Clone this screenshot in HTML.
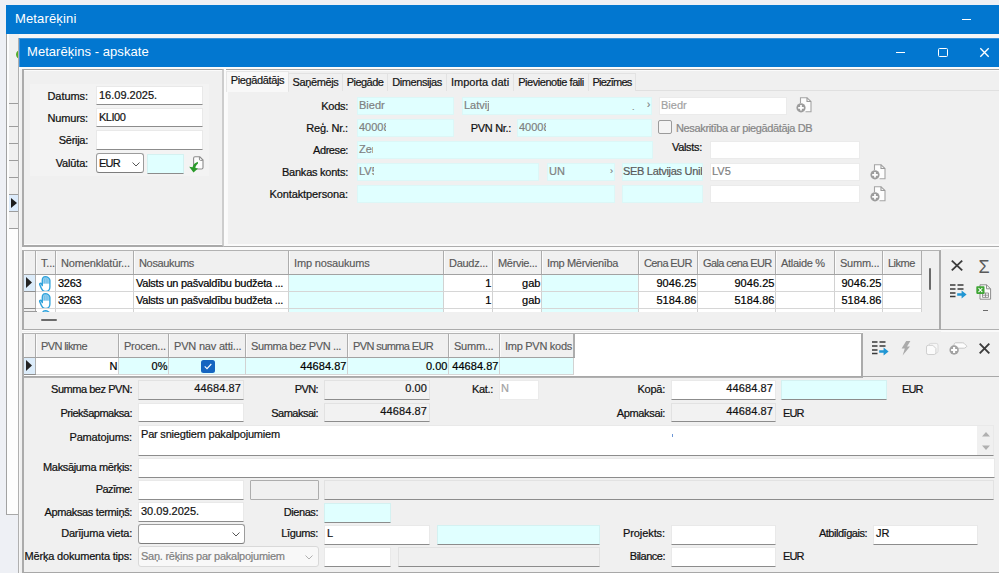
<!DOCTYPE html>
<html lang="lv">
<head>
<meta charset="utf-8">
<title>Metarēķins - apskate</title>
<style>
*{box-sizing:border-box;margin:0;padding:0}
html,body{width:999px;height:573px;overflow:hidden}
body{background:#eef0f5;font-family:"Liberation Sans",sans-serif;font-size:11px;color:#111;position:relative;letter-spacing:-0.25px}
.abs,.abs *{position:absolute}
#root *{position:absolute}
.t{white-space:nowrap;line-height:13px;height:13px;-webkit-text-stroke:0.2px}
.lbl{white-space:nowrap;line-height:13px;height:13px;text-align:right;color:#101010;-webkit-text-stroke:0.22px;margin-top:1px}
.in{background:#fff;border:1px solid #e9e9e9;border-bottom:1px solid #8c8c8c}
.in.cy{background:#e0ffff;border-color:#d4f1f1;border-bottom-color:#8c8c8c}
.in.ro{background:#f2f2f2;border:1px solid #e2e2e2;border-bottom:1px solid #8c8c8c}
.fl{background:#fff;border:1px solid #ebebeb}
.fc{background:#e0ffff;border:1px solid #dcf7f7}
.v{white-space:nowrap;line-height:13px;height:13px;left:2px;top:2px;color:#111;letter-spacing:0;-webkit-text-stroke:0.2px}
.fc>.v,.fl>.v{left:1px;top:1px}
.cut{overflow:hidden}
.g{color:#7f7f7f}
.r{left:auto;right:2px;text-align:right;letter-spacing:0.1px}
.tab{-webkit-text-stroke:0.2px;letter-spacing:-0.35px;top:73px;height:18px;border:1px solid #e2e2e2;border-bottom:none;background:#f0f0f0;text-align:center;line-height:16px;white-space:nowrap;color:#141414}
.hd{top:0;height:23px;background:#f0f0f0;border-right:2px solid #adadad;box-shadow:inset 1px 0 0 #fbfbfb;color:#585858;line-height:25px;padding-left:5px;white-space:nowrap;overflow:hidden;-webkit-text-stroke:0.15px}
.c{height:17px;background:#fff;border-right:1px solid #d2d2d2;border-bottom:1px solid #d6d6d6;line-height:16px;white-space:nowrap;overflow:hidden;padding:0 2px;color:#000;letter-spacing:-0.25px;-webkit-text-stroke:0.2px}
.c.cy{background:#e0ffff}
.c.n{text-align:right;padding-right:0.5px;letter-spacing:0.05px}
svg{overflow:visible}
</style>
</head>
<body>
<div id="root">

<!-- ===== outer window "Metarēķini" ===== -->
<div style="left:6px;top:5px;width:993px;height:29px;background:#0277d0"></div>
<div class="t" style="left:15px;top:11px;font-size:13px;line-height:16px;height:16px;color:#fff;letter-spacing:0.15px;-webkit-text-stroke:0">Metarēķini</div>
<div style="left:962px;top:19px;width:9px;height:1.3px;background:#fff"></div>
<!-- outer client strip -->
<div style="left:6px;top:34px;width:993px;height:5px;background:#f6f6f6"></div>
<div style="left:6px;top:34px;width:13px;height:481px;background:#fdfdfd;border-left:1px solid #a2a2a2;border-bottom:1px solid #a8a8a8"></div>
<div style="left:9px;top:34px;width:10px;height:194px;background:#f0f0f0"></div>
<div style="left:16px;top:50px;width:9px;height:9px;border-radius:50%;border:2px solid #55ad2c;background:#c9ecb2"></div>
<!-- row lines of hidden list -->
<div style="left:9px;top:103px;width:10px;height:1px;background:#9d9d9d"></div>
<div style="left:9px;top:126px;width:10px;height:1px;background:#9d9d9d"></div>
<div style="left:9px;top:143px;width:10px;height:1px;background:#9d9d9d"></div>
<div style="left:9px;top:160px;width:10px;height:1px;background:#9d9d9d"></div>
<div style="left:9px;top:177px;width:10px;height:1px;background:#9d9d9d"></div>
<div style="left:9px;top:194px;width:10px;height:18px;background:#dcebfb;border-top:1px solid #9d9d9d;border-bottom:1px solid #9d9d9d"></div>
<svg style="left:11px;top:198px" width="6" height="10" viewBox="0 0 6 10"><path d="M0 0 L6 5 L0 10 Z" fill="#1c1c1c"/></svg>
<div style="left:9px;top:228px;width:10px;height:1px;background:#9d9d9d"></div>

<!-- ===== inner window "Metarēķins - apskate" ===== -->
<div id="win" style="left:18px;top:38px;width:981px;height:535px;background:#f0f0f0;border-left:1px solid #b0b0b0;box-shadow:inset 1px 0 0 #f6f6f6"></div>
<div style="left:19px;top:38px;width:980px;height:29px;background:#0277d0;border-top:1px solid #3b93dc;border-left:1px solid #3b93dc"></div>
<div class="t" style="left:27px;top:44px;font-size:13px;line-height:16px;height:16px;color:#fff;letter-spacing:0.05px;-webkit-text-stroke:0">Metarēķins - apskate</div>
<div style="left:896px;top:52px;width:9px;height:1.3px;background:#fff"></div>
<div style="left:938px;top:48px;width:9.5px;height:9px;border:1.3px solid #fff;border-radius:1.5px"></div>
<svg style="left:980px;top:48px" width="9" height="9" viewBox="0 0 9 9"><path d="M0.3 0.3 L8.7 8.7 M8.7 0.3 L0.3 8.7" stroke="#fff" stroke-width="1.35" fill="none"/></svg>
<div style="left:19px;top:67px;width:980px;height:2px;background:#fafafa"></div>

<!-- ===== top-left panel ===== -->
<div style="left:22px;top:69px;width:977px;height:1px;background:#a3a3a3"></div>
<div style="left:22px;top:70px;width:977px;height:1px;background:#fbfbfb"></div>
<div style="left:22px;top:69px;width:202px;height:178px;border:2px solid #ababab;border-top:1px solid #a3a3a3;border-right:2px solid #cdcdcd;border-bottom:2px solid #a9a9a9;box-shadow:inset 0 1px 0 #fbfbfb,inset 0 -1px 0 #fbfbfb,2px 0 0 #fbfbfb"></div>
<div style="left:30px;top:84px;width:179px;height:92px;background:#f3f3f3"></div>
<div class="lbl" style="left:30px;top:89px;width:58px;letter-spacing:-0.06px">Datums:</div>
<div class="in" style="left:96px;top:86px;width:107px;height:19px"><div class="v">16.09.2025.</div></div>
<div class="lbl" style="left:30px;top:111px;width:58px;letter-spacing:-0.15px">Numurs:</div>
<div class="in" style="left:96px;top:108px;width:107px;height:19px"><div class="v" style="letter-spacing:-0.5px">KLI00</div></div>
<div class="lbl" style="left:30px;top:133px;width:58px;letter-spacing:-0.28px">Sērija:</div>
<div class="in" style="left:96px;top:130px;width:107px;height:20px"></div>
<div class="lbl" style="left:30px;top:156px;width:58px;letter-spacing:-0.17px">Valūta:</div>
<div style="left:96px;top:153px;width:48px;height:20px;background:#fff;border:1px solid #9c9c9c;border-bottom-color:#7d7d7d;border-radius:3px"><div class="v" style="left:2px;top:3px;letter-spacing:-0.8px">EUR</div>
<svg style="left:35px;top:8px" width="8" height="5" viewBox="0 0 8 5"><path d="M0.5 0.5 L4 4 L7.5 0.5" stroke="#555" stroke-width="1" fill="none"/></svg></div>
<div class="in cy" style="left:147px;top:154px;width:37px;height:20px"></div>
<!-- import icon -->
<svg style="left:189px;top:156px" width="16" height="17" viewBox="0 0 16 17">
<path d="M4.6 2.2 a1.4 1.4 0 0 1 1.4 -1.4 H10.8 L14 4 V11.6 a1.4 1.4 0 0 1 -1.4 1.4 H6 a1.4 1.4 0 0 1 -1.4 -1.4 Z" fill="#fdfdfd" stroke="#8c8c8c" stroke-width="1.1"/>
<path d="M10.4 1 V3.2 a1.2 1.2 0 0 0 1.2 1.2 H13.8" fill="none" stroke="#8c8c8c" stroke-width="1"/>
<path d="M8.9 5.8 C6 6.8 4.2 8.6 3.5 11.3 L0.2 10.7 L4.5 16.4 L9 12.5 L6.4 12 C6.7 9.9 7.5 8.5 8.9 7.7 Z" fill="#2a9a2a"/>
</svg>

<!-- ===== tab control ===== -->
<div style="left:226px;top:90px;width:773px;height:155px;background:#f0f0f0;border-top:1px solid #e0e0e0;border-left:2px solid #fafafa"></div>
<div class="tab" style="left:226px;top:71px;width:63px;height:21px;background:#f7f7f7;border-color:#e6e6e6;line-height:17px;background:#f8f8f8;letter-spacing:-0.37px">Piegādātājs</div>
<div class="tab" style="left:288px;width:55px;letter-spacing:-0.36px">Saņēmējs</div>
<div class="tab" style="left:342px;width:46px;letter-spacing:-0.54px">Piegāde</div>
<div class="tab" style="left:387px;width:60px;letter-spacing:-0.43px">Dimensijas</div>
<div class="tab" style="left:446px;width:68px;letter-spacing:0.01px">Importa dati</div>
<div class="tab" style="left:513px;width:76px;letter-spacing:-0.45px">Pievienotie faili</div>
<div class="tab" style="left:588px;width:48px;letter-spacing:-0.75px">Piezīmes</div>

<div class="lbl" style="left:248px;top:99px;width:100px;letter-spacing:-0.28px">Kods:</div>
<div class="fc" style="left:357px;top:97px;width:97px;height:18px"><div class="v g">Biedr</div></div>
<div class="fc" style="left:462px;top:97px;width:190px;height:18px"><div class="v g cut" style="width:25px">Latvij</div><div class="v g" style="left:169px;top:3px;font-size:9px">.</div><div class="v g" style="left:184px;top:0px;font-size:10px">›</div></div>
<div class="fl" style="left:659px;top:97px;width:128px;height:18px"><div class="v" style="color:#a2a2a2">Biedr</div></div>

<div class="lbl" style="left:248px;top:121px;width:100px;letter-spacing:-0.18px">Reģ. Nr.:</div>
<div class="fc" style="left:357px;top:119px;width:97px;height:18px"><div class="v g cut" style="width:27px">40008</div></div>
<div class="lbl" style="left:440px;top:121px;width:71px;letter-spacing:-0.32px">PVN Nr.:</div>
<div class="fc" style="left:517px;top:119px;width:135px;height:18px"><div class="v g cut" style="width:27px">40008</div></div>
<div style="left:658px;top:120px;width:14px;height:14px;background:#f4f4f4;border:1px solid #9b9b9b;border-radius:2px"></div>
<div class="t" style="left:676px;top:122px;color:#868686;letter-spacing:-0.36px">Nesakritība ar piegādātāja DB</div>

<div class="lbl" style="left:248px;top:143px;width:100px;letter-spacing:-0.42px">Adrese:</div>
<div class="fc" style="left:357px;top:141px;width:296px;height:18px"><div class="v g cut" style="width:14px">Zem</div></div>
<div class="lbl" style="left:640px;top:140px;width:62px;letter-spacing:-0.31px">Valsts:</div>
<div class="fl" style="left:710px;top:141px;width:150px;height:18px"></div>

<div class="lbl" style="left:248px;top:165px;width:100px;letter-spacing:-0.24px">Bankas konts:</div>
<div class="fc" style="left:357px;top:163px;width:182px;height:18px"><div class="v g cut" style="width:15px">LV5</div></div>
<div class="fc" style="left:547px;top:163px;width:68px;height:18px"><div class="v g">UN</div><div class="v g" style="left:62px;top:1px;font-size:9px">›</div></div>
<div class="fc" style="left:622px;top:163px;width:81px;height:18px;overflow:hidden"><div class="v" style="left:0px;color:#5a5a5a;letter-spacing:-0.3px">SEB Latvijas Unibanka</div></div>
<div class="fl" style="left:710px;top:163px;width:150px;height:18px"><div class="v g">LV5</div></div>

<div class="lbl" style="left:248px;top:187px;width:100px;letter-spacing:-0.11px">Kontaktpersona:</div>
<div class="fc" style="left:357px;top:185px;width:258px;height:18px"></div>
<div class="fc" style="left:622px;top:185px;width:81px;height:18px"></div>
<div class="fl" style="left:710px;top:185px;width:150px;height:18px"></div>

<!-- doc-plus icons -->
<svg style="left:796px;top:97px" width="16" height="16" viewBox="0 0 16 16"><path d="M4.5 6 V0.8 H11 L15 4.5 V14.8 H9.5" fill="#fdfdfd" stroke="#a4a4a4" stroke-width="1.1"/><path d="M11 0.8 V4.5 H15" fill="none" stroke="#9a9a9a" stroke-width="1.1"/><circle cx="5" cy="10.8" r="4.6" fill="#9c9c9c"/><path d="M5 8 V13.6 M2.2 10.8 H7.8" stroke="#fff" stroke-width="1.7"/></svg>
<svg style="left:870px;top:164px" width="16" height="16" viewBox="0 0 16 16"><path d="M4.5 6 V0.8 H11 L15 4.5 V14.8 H9.5" fill="#fdfdfd" stroke="#a4a4a4" stroke-width="1.1"/><path d="M11 0.8 V4.5 H15" fill="none" stroke="#9a9a9a" stroke-width="1.1"/><circle cx="5" cy="10.8" r="4.6" fill="#9c9c9c"/><path d="M5 8 V13.6 M2.2 10.8 H7.8" stroke="#fff" stroke-width="1.7"/></svg>
<svg style="left:870px;top:186px" width="16" height="16" viewBox="0 0 16 16"><path d="M4.5 6 V0.8 H11 L15 4.5 V14.8 H9.5" fill="#fdfdfd" stroke="#a4a4a4" stroke-width="1.1"/><path d="M11 0.8 V4.5 H15" fill="none" stroke="#9a9a9a" stroke-width="1.1"/><circle cx="5" cy="10.8" r="4.6" fill="#9c9c9c"/><path d="M5 8 V13.6 M2.2 10.8 H7.8" stroke="#fff" stroke-width="1.7"/></svg>

<!-- bottom edge of top area -->
<div style="left:224px;top:245.5px;width:775px;height:1.5px;background:#adadad"></div>
<div style="left:226px;top:244px;width:773px;height:2px;background:#fafafa"></div>
<div style="left:22px;top:247px;width:977px;height:2px;background:#fbfbfb"></div>
<!-- ===== grid 1 ===== -->
<div style="left:22px;top:250px;width:919px;height:80px;background:#f0f0f0;border:2px solid #ababab;border-top:1px solid #b2b2b2;border-bottom-width:1px;box-shadow:0 1px 0 #fbfbfb,0 -1px 0 #fbfbfb"></div>
<div id="g1" style="left:24px;top:251px;width:898px;height:61px;overflow:hidden;background:#fff">
<div class="hd" style="left:0px;width:13px;padding:0"></div>
<div class="hd" style="left:12px;width:21px"><span style="position:static;letter-spacing:-0.17px">T...</span></div>
<div class="hd" style="left:32px;width:79px"><span style="position:static;letter-spacing:-0.15px">Nomenklatūr...</span></div>
<div class="hd" style="left:110px;width:156px"><span style="position:static;letter-spacing:-0.34px">Nosaukums</span></div>
<div class="hd" style="left:265px;width:156px"><span style="position:static;letter-spacing:-0.16px">Imp nosaukums</span></div>
<div class="hd" style="left:420px;width:50px"><span style="position:static;letter-spacing:-0.28px">Daudz...</span></div>
<div class="hd" style="left:469px;width:50px"><span style="position:static;letter-spacing:-0.32px">Mērvie...</span></div>
<div class="hd" style="left:518px;width:98px"><span style="position:static;letter-spacing:-0.34px">Imp Mērvienība</span></div>
<div class="hd" style="left:615px;width:60px"><span style="position:static;letter-spacing:-0.60px">Cena EUR</span></div>
<div class="hd" style="left:674px;width:79px"><span style="position:static;letter-spacing:-0.60px">Gala cena EUR</span></div>
<div class="hd" style="left:752px;width:60px"><span style="position:static;letter-spacing:-0.30px">Atlaide %</span></div>
<div class="hd" style="left:811px;width:49px"><span style="position:static;letter-spacing:-0.24px">Summ...</span></div>
<div class="hd" style="left:859px;width:40px"><span style="position:static;letter-spacing:-0.52px">Likme</span></div>
<div style="left:0;top:23px;width:898px;height:1px;background:#a2a2a2"></div>
<div style="left:0px;top:24px;width:13px;height:17px;background:#dcecfa;border-right:2px solid #adadad;border-bottom:1px solid #8f8f8f"></div>
<svg style="left:2px;top:26.4px" width="6" height="11" viewBox="0 0 6 11"><path d="M0 0 L6 5.5 L0 11 Z" fill="#242424"/></svg>
<div class="c" style="left:12px;top:24px;width:20px;padding:0"><svg style="left:2.6px;top:1px" width="13" height="16" viewBox="0 0 13 16"><path d="M3.3 9.6 V4.2 C3.3 2.2 4.8 0.8 6.4 0.7 C8.4 0.8 10.9 2.4 10.9 4.2 V11 C10.9 13.6 9.2 15.3 7 15.3 H5.8 C4.2 15.3 3.2 14.3 2.5 12.6 L0.7 8.6 C0.3 7.4 1.8 6.8 2.4 7.9 Z" fill="#fff"/><path d="M3.3 7.8 V4.2 C3.3 2.2 4.8 0.8 6.4 0.7 C8.4 0.8 10.9 2.4 10.9 4.2 V7.8 Z" fill="#a6d7f1"/><path d="M5.3 2.4 V7.4 M7.1 2 V7.4 M8.9 2.6 V7.4" stroke="#55b3e3" stroke-width="0.8" fill="none"/><path d="M3.3 9.6 V4.2 C3.3 2.2 4.8 0.8 6.4 0.7 C8.4 0.8 10.9 2.4 10.9 4.2 V11 C10.9 13.6 9.2 15.3 7 15.3 H5.8 C4.2 15.3 3.2 14.3 2.5 12.6 L0.7 8.6 C0.3 7.4 1.8 6.8 2.4 7.9 L3.3 9.6" fill="none" stroke="#2fa2db" stroke-width="1.35" stroke-linejoin="round" stroke-linecap="round"/></svg></div>
<div class="c" style="left:32px;top:24px;width:78px">3263</div>
<div class="c" style="left:110px;top:24px;width:155px">Valsts un pašvaldību budžeta ...</div>
<div class="c cy" style="left:265px;top:24px;width:155px"></div>
<div class="c n" style="left:420px;top:24px;width:49px">1</div>
<div class="c n" style="left:469px;top:24px;width:49px">gab</div>
<div class="c cy" style="left:518px;top:24px;width:97px"></div>
<div class="c n" style="left:615px;top:24px;width:59px">9046.25</div>
<div class="c n" style="left:674px;top:24px;width:78px">9046.25</div>
<div class="c n" style="left:752px;top:24px;width:59px"></div>
<div class="c n" style="left:811px;top:24px;width:48px">9046.25</div>
<div class="c" style="left:859px;top:24px;width:39px"></div>
<div style="left:0px;top:41px;width:13px;height:17px;background:#f0f0f0;border-right:2px solid #adadad;border-bottom:1px solid #8f8f8f"></div>
<div class="c" style="left:12px;top:41px;width:20px;padding:0"><svg style="left:2.6px;top:1px" width="13" height="16" viewBox="0 0 13 16"><path d="M3.3 9.6 V4.2 C3.3 2.2 4.8 0.8 6.4 0.7 C8.4 0.8 10.9 2.4 10.9 4.2 V11 C10.9 13.6 9.2 15.3 7 15.3 H5.8 C4.2 15.3 3.2 14.3 2.5 12.6 L0.7 8.6 C0.3 7.4 1.8 6.8 2.4 7.9 Z" fill="#fff"/><path d="M3.3 7.8 V4.2 C3.3 2.2 4.8 0.8 6.4 0.7 C8.4 0.8 10.9 2.4 10.9 4.2 V7.8 Z" fill="#a6d7f1"/><path d="M5.3 2.4 V7.4 M7.1 2 V7.4 M8.9 2.6 V7.4" stroke="#55b3e3" stroke-width="0.8" fill="none"/><path d="M3.3 9.6 V4.2 C3.3 2.2 4.8 0.8 6.4 0.7 C8.4 0.8 10.9 2.4 10.9 4.2 V11 C10.9 13.6 9.2 15.3 7 15.3 H5.8 C4.2 15.3 3.2 14.3 2.5 12.6 L0.7 8.6 C0.3 7.4 1.8 6.8 2.4 7.9 L3.3 9.6" fill="none" stroke="#2fa2db" stroke-width="1.35" stroke-linejoin="round" stroke-linecap="round"/></svg></div>
<div class="c" style="left:32px;top:41px;width:78px">3263</div>
<div class="c" style="left:110px;top:41px;width:155px">Valsts un pašvaldību budžeta ...</div>
<div class="c cy" style="left:265px;top:41px;width:155px"></div>
<div class="c n" style="left:420px;top:41px;width:49px">1</div>
<div class="c n" style="left:469px;top:41px;width:49px">gab</div>
<div class="c cy" style="left:518px;top:41px;width:97px"></div>
<div class="c n" style="left:615px;top:41px;width:59px">5184.86</div>
<div class="c n" style="left:674px;top:41px;width:78px">5184.86</div>
<div class="c n" style="left:752px;top:41px;width:59px"></div>
<div class="c n" style="left:811px;top:41px;width:48px">5184.86</div>
<div class="c" style="left:859px;top:41px;width:39px"></div>
<div style="left:0px;top:58px;width:13px;height:17px;background:#f0f0f0;border-right:2px solid #adadad;border-bottom:1px solid #8f8f8f"></div>
<div class="c" style="left:12px;top:58px;width:20px;padding:0"><svg style="left:2.6px;top:1px" width="13" height="16" viewBox="0 0 13 16"><path d="M3.3 9.6 V4.2 C3.3 2.2 4.8 0.8 6.4 0.7 C8.4 0.8 10.9 2.4 10.9 4.2 V11 C10.9 13.6 9.2 15.3 7 15.3 H5.8 C4.2 15.3 3.2 14.3 2.5 12.6 L0.7 8.6 C0.3 7.4 1.8 6.8 2.4 7.9 Z" fill="#fff"/><path d="M3.3 7.8 V4.2 C3.3 2.2 4.8 0.8 6.4 0.7 C8.4 0.8 10.9 2.4 10.9 4.2 V7.8 Z" fill="#a6d7f1"/><path d="M5.3 2.4 V7.4 M7.1 2 V7.4 M8.9 2.6 V7.4" stroke="#55b3e3" stroke-width="0.8" fill="none"/><path d="M3.3 9.6 V4.2 C3.3 2.2 4.8 0.8 6.4 0.7 C8.4 0.8 10.9 2.4 10.9 4.2 V11 C10.9 13.6 9.2 15.3 7 15.3 H5.8 C4.2 15.3 3.2 14.3 2.5 12.6 L0.7 8.6 C0.3 7.4 1.8 6.8 2.4 7.9 L3.3 9.6" fill="none" stroke="#2fa2db" stroke-width="1.35" stroke-linejoin="round" stroke-linecap="round"/></svg></div>
<div class="c" style="left:32px;top:58px;width:78px"></div>
<div class="c" style="left:110px;top:58px;width:155px"></div>
<div class="c cy" style="left:265px;top:58px;width:155px"></div>
<div class="c n" style="left:420px;top:58px;width:49px"></div>
<div class="c n" style="left:469px;top:58px;width:49px"></div>
<div class="c cy" style="left:518px;top:58px;width:97px"></div>
<div class="c n" style="left:615px;top:58px;width:59px"></div>
<div class="c n" style="left:674px;top:58px;width:78px"></div>
<div class="c n" style="left:752px;top:58px;width:59px"></div>
<div class="c n" style="left:811px;top:58px;width:48px"></div>
<div class="c" style="left:859px;top:58px;width:39px"></div>
<div style="left:0;top:60px;width:13px;height:1px;background:#9a9a9a"></div>
</div>
<div style="left:929px;top:268px;width:2px;height:22px;background:#6b6b6b;border-radius:1px"></div>
<div style="left:41px;top:319px;width:16px;height:2px;background:#6b6b6b;border-radius:1px"></div>
<div style="left:941px;top:329px;width:58px;height:1px;background:#b0b0b0"></div><div style="left:941px;top:330px;width:58px;height:2px;background:#fafafa"></div>
<svg style="left:951px;top:260px" width="12" height="11" viewBox="0 0 12 11"><path d="M0.8 0.6 L11.2 10.4 M11.2 0.6 L0.8 10.4" stroke="#3c3c3c" stroke-width="1.9" fill="none"/></svg>
<div class="t" style="left:978.5px;top:256.5px;font-size:18px;line-height:20px;height:20px;color:#5a5a5a;letter-spacing:0;-webkit-text-stroke:0">Σ</div>
<svg style="left:950px;top:284px" width="17" height="15" viewBox="0 0 17 15"><path d="M0 1 H5.5 M7.5 1 H13.5 M0 5 H5.5 M7.5 5 H13.5 M0 9 H5.5 M0 12.6 H5.5" stroke="#3a3a3a" stroke-width="1.5" fill="none"/><path d="M7.2 9.3 H11.6 V6.6 L16.6 10.5 L11.6 14.4 V11.7 H7.2 Z" fill="#2196d3"/></svg>
<svg style="left:976px;top:284px" width="16" height="16" viewBox="0 0 16 16"><path d="M4 0.8 H10.5 L14.6 4.8 V15.2 H4 Z" fill="#fafafa" stroke="#8d8d8d" stroke-width="1"/><path d="M10.5 0.8 V4.8 H14.6" fill="none" stroke="#8d8d8d" stroke-width="1"/><path d="M6.5 9 H12.5 V13.4 H6.5 Z M9.5 9 V13.4 M6.5 11.2 H12.5" fill="none" stroke="#8d8d8d" stroke-width="0.9"/><rect x="0.3" y="2.3" width="8.2" height="7.6" rx="0.8" fill="#3fa535"/><path d="M2.5 4 L6.3 8.2 M6.3 4 L2.5 8.2" stroke="#fff" stroke-width="1.1"/></svg>
<div style="left:983px;top:310px;width:5px;height:1px;background:#6a6a6a"></div>
<!-- ===== grid 2 ===== -->
<div style="left:22px;top:333px;width:841px;height:45px;background:#fff;border:2px solid #ababab;border-top:1px solid #b4b4b4;border-bottom:1px solid #b0b0b0;box-shadow:0 -1px 0 #fbfbfb"></div>
<div id="g2" style="left:24px;top:334px;width:837px;height:42px;overflow:hidden;background:#fff">
<div class="hd" style="left:0px;width:13px;padding:0"></div>
<div class="hd" style="left:12px;width:84px"><span style="position:static;letter-spacing:-0.60px">PVN likme</span></div>
<div class="hd" style="left:95px;width:51px"><span style="position:static;letter-spacing:-0.25px">Procen...</span></div>
<div class="hd" style="left:145px;width:78px"><span style="position:static;letter-spacing:-0.19px">PVN nav atti...</span></div>
<div class="hd" style="left:222px;width:103px"><span style="position:static;letter-spacing:-0.39px">Summa bez PVN ...</span></div>
<div class="hd" style="left:324px;width:102px"><span style="position:static;letter-spacing:-0.60px">PVN summa EUR</span></div>
<div class="hd" style="left:425px;width:52px"><span style="position:static;letter-spacing:-0.24px">Summ...</span></div>
<div class="hd" style="left:476px;width:75px"><span style="position:static;letter-spacing:-0.28px">Imp PVN kods</span></div>
<div style="left:0;top:23px;width:551px;height:1px;background:#a2a2a2"></div>
<div style="left:0px;top:24px;width:13px;height:17px;background:#dcecfa;border-right:2px solid #adadad;border-bottom:1px solid #8f8f8f"></div>
<svg style="left:2px;top:26.4px" width="6" height="11" viewBox="0 0 6 11"><path d="M0 0 L6 5.5 L0 11 Z" fill="#242424"/></svg>
<div class="c n" style="left:12px;top:24px;width:83px">N</div>
<div class="c cy n" style="left:95px;top:24px;width:50px">0%</div>
<div class="c cy" style="left:145px;top:24px;width:77px;padding:0"><div style="left:32px;top:2px;width:14px;height:13px;background:#1565c0;border-radius:2.5px"></div><svg style="left:35px;top:5px" width="8" height="7" viewBox="0 0 8 7"><path d="M0.7 3.4 L3 5.6 L7.3 1" stroke="#fff" stroke-width="1.1" fill="none"/></svg></div>
<div class="c cy n" style="left:222px;top:24px;width:102px">44684.87</div>
<div class="c cy n" style="left:324px;top:24px;width:101px">0.00</div>
<div class="c cy n" style="left:425px;top:24px;width:51px">44684.87</div>
<div class="c cy" style="left:476px;top:24px;width:74px"></div>
</div>
<svg style="left:872px;top:341px" width="17" height="15" viewBox="0 0 17 15"><path d="M0 1 H5.5 M7.5 1 H13.5 M0 5 H5.5 M7.5 5 H13.5 M0 9 H5.5 M0 12.6 H5.5" stroke="#3a3a3a" stroke-width="1.5" fill="none"/><path d="M7.2 9.3 H11.6 V6.6 L16.6 10.5 L11.6 14.4 V11.7 H7.2 Z" fill="#2196d3"/></svg>
<svg style="left:901px;top:341px" width="10" height="15" viewBox="0 0 10 15"><path d="M5.2 0 H9.4 L6 5.6 H9 L1.6 14.6 L3.8 7.6 H0.6 Z" fill="#ababab"/></svg>
<svg style="left:926px;top:343px" width="13" height="12" viewBox="0 0 13 12"><rect x="3" y="0.4" width="9" height="9.6" rx="1.8" fill="#f6f6f6" stroke="#d6d6d6" stroke-width="0.9"/><path d="M0.5 4 a1.7 1.7 0 0 1 1.7 -1.7 H6.8 L9.9 5.4 V9.8 a1.7 1.7 0 0 1 -1.7 1.7 H2.2 a1.7 1.7 0 0 1 -1.7 -1.7 Z" fill="#fbfbfb" stroke="#cfcfcf" stroke-width="1"/></svg>
<svg style="left:949px;top:342px" width="18" height="14" viewBox="0 0 18 14"><path d="M4.6 4 L5.4 1.6 Q5.7 0.8 6.6 0.8 H13.8 Q14.5 0.8 15 1.3 L17.5 3.8 Q18 4.5 17.3 5 L15.8 6 Q15.4 6.2 14.8 6.2 H9" fill="#fdfdfd" stroke="#c2c2c2" stroke-width="0.9"/><circle cx="5.1" cy="8" r="4.7" fill="#a2a2a2"/><path d="M5.1 5 V11 M2.1 8 H8.1" stroke="#fff" stroke-width="2.1"/></svg>
<svg style="left:979px;top:343px" width="11" height="11" viewBox="0 0 11 11"><path d="M0.7 0.7 L10.3 10.3 M10.3 0.7 L0.7 10.3" stroke="#3c3c3c" stroke-width="1.9" fill="none"/></svg>
<!-- ===== bottom form ===== -->
<div style="left:22px;top:376px;width:977px;height:197px;border:1px solid #a8a8a8;border-left:2px solid #ababab;border-right:none"></div>

<div class="lbl" style="left:30px;top:382px;width:102px;letter-spacing:-0.46px">Summa bez PVN:</div>
<div class="in ro" style="left:138px;top:380px;width:106px;height:20px"><div class="v r" style="top:1px">44684.87</div></div>
<div class="lbl" style="left:248px;top:382px;width:70px;letter-spacing:-0.60px">PVN:</div>
<div class="in ro" style="left:324px;top:380px;width:106px;height:20px"><div class="v r" style="top:1px">0.00</div></div>
<div class="lbl" style="left:440px;top:382px;width:53px;letter-spacing:-0.32px">Kat.:</div>
<div class="fl" style="left:499px;top:380px;width:40px;height:20px"><div class="v" style="color:#a2a2a2">N</div></div>
<div class="lbl" style="left:600px;top:382px;width:65px;letter-spacing:-0.25px">Kopā:</div>
<div class="in" style="left:671px;top:380px;width:105px;height:20px"><div class="v r" style="top:1px">44684.87</div></div>
<div class="in cy" style="left:781px;top:380px;width:106px;height:20px"></div>
<div class="t" style="left:902px;top:383px;letter-spacing:-0.9px">EUR</div>

<div class="lbl" style="left:30px;top:406px;width:102px;letter-spacing:-0.48px">Priekšapmaksa:</div>
<div class="in" style="left:138px;top:403px;width:106px;height:19px"></div>
<div class="lbl" style="left:248px;top:406px;width:70px;letter-spacing:-0.51px">Samaksai:</div>
<div class="in ro" style="left:324px;top:403px;width:106px;height:19px"><div class="v r" style="top:1px">44684.87</div></div>
<div class="lbl" style="left:600px;top:406px;width:65px;letter-spacing:-0.34px">Apmaksai:</div>
<div class="in ro" style="left:671px;top:403px;width:105px;height:19px"><div class="v r" style="top:1px">44684.87</div></div>
<div class="t" style="left:783px;top:407px;letter-spacing:-0.9px">EUR</div>

<div class="lbl" style="left:30px;top:430px;width:102px;letter-spacing:-0.15px">Pamatojums:</div>
<div class="in" style="left:138px;top:425px;width:856px;height:31px"><div class="v" style="top:2px;letter-spacing:-0.2px">Par sniegtiem pakalpojumiem</div>
<div style="right:0;top:0;width:16px;height:29px;background:#f0f0f0"></div>
<svg style="left:843px;top:6px" width="8" height="18" viewBox="0 0 8 18"><path d="M0 4.4 L4 0 L8 4.4 Z M0 13.6 L4 18 L8 13.6 Z" fill="#b0b0b0"/></svg>
<div style="left:533px;top:8px;width:1px;height:3px;background:#6c97d6"></div>
</div>

<div class="lbl" style="left:10px;top:460px;width:122px;letter-spacing:-0.34px">Maksājuma mērķis:</div>
<div class="in" style="left:138px;top:458px;width:857px;height:20px"></div>

<div class="lbl" style="left:30px;top:482px;width:102px;letter-spacing:-0.60px">Pazīme:</div>
<div class="in" style="left:138px;top:480px;width:106px;height:20px"></div>
<div style="left:250px;top:480px;width:69px;height:20px;background:#f0f0f0;border:1px solid #adadad;border-radius:1px"></div>
<div class="in ro" style="left:324px;top:480px;width:670px;height:20px;background:#f0f0f0"></div>

<div class="lbl" style="left:10px;top:505px;width:122px;letter-spacing:-0.35px">Apmaksas termiņš:</div>
<div class="in" style="left:138px;top:502px;width:106px;height:20px"><div class="v" style="top:2px">30.09.2025.</div></div>
<div class="lbl" style="left:248px;top:505px;width:70px;letter-spacing:-0.44px">Dienas:</div>
<div class="in cy" style="left:324px;top:503px;width:67px;height:20px"></div>

<div class="lbl" style="left:30px;top:526px;width:102px;letter-spacing:-0.21px">Darījuma vieta:</div>
<div style="left:138px;top:524px;width:107px;height:20px;background:#fff;border:1px solid #9c9c9c;border-bottom-color:#7d7d7d;border-radius:3px">
<svg style="left:93px;top:7px" width="8" height="5" viewBox="0 0 8 5"><path d="M0.5 0.5 L4 4 L7.5 0.5" stroke="#555" stroke-width="1" fill="none"/></svg></div>
<div class="lbl" style="left:248px;top:526px;width:70px;letter-spacing:-0.34px">Līgums:</div>
<div class="in" style="left:324px;top:525px;width:106px;height:20px"><div class="v" style="top:1px">L</div></div>
<div class="in cy" style="left:437px;top:525px;width:163px;height:20px"></div>
<div class="lbl" style="left:600px;top:526px;width:65px;letter-spacing:-0.09px">Projekts:</div>
<div class="in" style="left:671px;top:525px;width:105px;height:20px"></div>
<div class="lbl" style="left:790px;top:526px;width:77px;letter-spacing:-0.48px">Atbildīgais:</div>
<div class="in" style="left:873px;top:525px;width:105px;height:20px"><div class="v" style="top:1px">JR</div></div>

<div class="lbl" style="left:10px;top:549px;width:122px;letter-spacing:-0.18px">Mērķa dokumenta tips:</div>
<div style="left:138px;top:546px;width:181px;height:21px;background:#f8f8f8;border:1px solid #d9d9d9;border-radius:3px"><div class="v g" style="top:3px;letter-spacing:-0.25px">Saņ. rēķins par pakalpojumiem</div>
<svg style="left:166px;top:8px" width="8" height="5" viewBox="0 0 8 5"><path d="M0.5 0.5 L4 4 L7.5 0.5" stroke="#b0b0b0" stroke-width="1" fill="none"/></svg></div>
<div class="in" style="left:324px;top:547px;width:67px;height:20px"></div>
<div class="in ro" style="left:398px;top:547px;width:202px;height:20px;background:#f0f0f0"></div>
<div class="lbl" style="left:600px;top:549px;width:65px;letter-spacing:-0.49px">Bilance:</div>
<div class="in" style="left:671px;top:547px;width:105px;height:20px"></div>
<div class="t" style="left:783px;top:550px;letter-spacing:-0.9px">EUR</div>




</div>
</body>
</html>
